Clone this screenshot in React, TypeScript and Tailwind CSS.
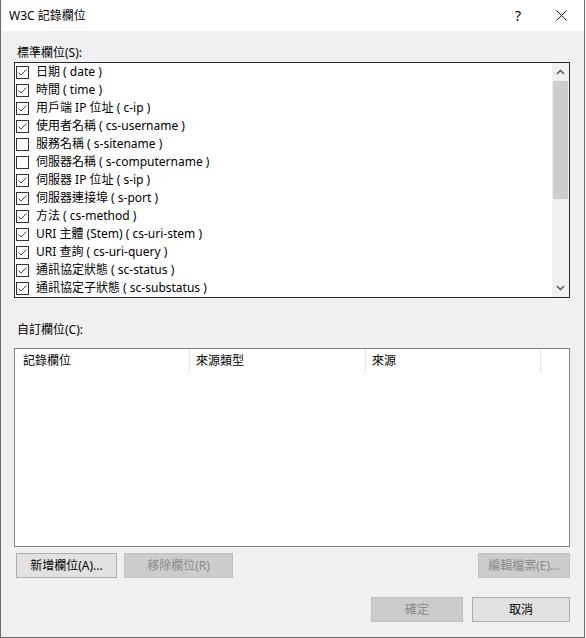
import React from 'react';

// Standard W3C logging fields shown in the upper list box
const fields: { label: string; checked: boolean }[] = [
  { label: '日期 ( date )', checked: true },
  { label: '時間 ( time )', checked: true },
  { label: '用戶端 IP 位址 ( c-ip )', checked: true },
  { label: '使用者名稱 ( cs-username )', checked: true },
  { label: '服務名稱 ( s-sitename )', checked: false },
  { label: '伺服器名稱 ( s-computername )', checked: false },
  { label: '伺服器 IP 位址 ( s-ip )', checked: true },
  { label: '伺服器連接埠 ( s-port )', checked: true },
  { label: '方法 ( cs-method )', checked: true },
  { label: 'URI 主體 (Stem) ( cs-uri-stem )', checked: true },
  { label: 'URI 查詢 ( cs-uri-query )', checked: true },
  { label: '通訊協定狀態 ( sc-status )', checked: true },
  { label: '通訊協定子狀態 ( sc-substatus )', checked: true },
];

const FONT = "font-['Noto_Sans','Noto_Sans_CJK_TC',sans-serif]";

function CheckBox({ checked }: { checked: boolean }) {
  return (
    <div className="w-[13px] h-[13px] border border-[#333333] bg-white shrink-0 flex items-center justify-center">
      {checked && (
        <svg width="11" height="11" viewBox="0 0 11 11">
          <polyline points="1.5,5.5 4,8 9.5,2.5" fill="none" stroke="#444444" strokeWidth="1" />
        </svg>
      )}
    </div>
  );
}

function Chevron({ up }: { up?: boolean }) {
  return (
    <svg width="9" height="6" viewBox="0 0 9 6">
      <polyline
        points={up ? '1,5 4.5,1.5 8,5' : '1,1 4.5,4.5 8,1'}
        fill="none"
        stroke="#606060"
        strokeWidth="1.6"
      />
    </svg>
  );
}

function Button({ label, disabled, className }: { label: string; disabled?: boolean; className: string }) {
  return (
    <div
      className={`flex items-center justify-center text-[12px] leading-none border
        ${disabled ? 'bg-[#cccccc] border-[#bfbfbf] text-[#8a8a8a]' : 'bg-[#e1e1e1] border-[#adadad] text-black'}
        ${className}`}
    >
      {label}
    </div>
  );
}

export default function App() {
  return (
    <div className={`w-[585px] h-[638px] bg-[#f0f0f0] border-l border-r border-b border-[#6a6a6a] flex flex-col ${FONT} text-black`}>
      {/* Title bar */}
      <div className="h-[31px] bg-white flex items-center shrink-0">
        <span className="pl-[8px] text-[12px]">W3C 記錄欄位</span>
        <span className="ml-auto text-[14px] w-[46px] pl-[6px] text-center">?</span>
        <div className="w-[46px] h-[31px] flex items-center justify-center">
          <svg width="11" height="11" viewBox="0 0 11 11">
            <path d="M0.5 0.5 L10.5 10.5 M10.5 0.5 L0.5 10.5" stroke="#111" strokeWidth="1" />
          </svg>
        </div>
      </div>

      <div className="flex flex-col pl-[13px]">
        {/* Standard fields */}
        <div className="mt-[13px] h-[18px] leading-[18px] text-[12px] pl-[3px]">標準欄位(S):</div>
        <div className="w-[556px] h-[236px] border border-[#2a2a2a] bg-white flex">
          <div className="flex-1 flex flex-col">
            {fields.map((f) => (
              <div key={f.label} className="h-[18px] flex items-center pl-[1px] gap-[7px]">
                <CheckBox checked={f.checked} />
                <span className="text-[12px] leading-none whitespace-nowrap">{f.label}</span>
              </div>
            ))}
          </div>
          <div className="w-[17px] bg-[#f0f0f0] flex flex-col">
            <div className="h-[18px] flex items-center justify-center">
              <Chevron up />
            </div>
            <div className="h-[118px] mx-[1px] bg-[#cdcdcd]" />
            <div className="flex-1" />
            <div className="h-[18px] flex items-center justify-center">
              <Chevron />
            </div>
          </div>
        </div>

        {/* Custom fields */}
        <div className="mt-[23px] h-[18px] leading-[18px] text-[12px] pl-[3px]">自訂欄位(C):</div>
        <div className="mt-[9px] w-[556px] h-[199px] border border-[#828282] bg-white">
          <div className="h-[24px] flex text-[12px]">
            <div className="w-[175px] border-r border-[#e5e5e5] pl-[8px] flex items-center">記錄欄位</div>
            <div className="w-[176px] border-r border-[#e5e5e5] pl-[6px] flex items-center">來源類型</div>
            <div className="w-[175px] border-r border-[#e5e5e5] pl-[6px] flex items-center">來源</div>
          </div>
        </div>

        {/* Field action buttons */}
        <div className="mt-[6px] flex w-[556px] pl-[2px]">
          <Button label="新增欄位(A)..." className="w-[101px] h-[25px]" />
          <Button label="移除欄位(R)" disabled className="ml-[7px] w-[109px] h-[25px]" />
          <Button label="編輯檔案(E)..." disabled className="ml-auto w-[92px] h-[25px]" />
        </div>

        {/* Dialog buttons */}
        <div className="mt-[19px] flex justify-end w-[556px]">
          <Button label="確定" disabled className="w-[92px] h-[25px]" />
          <Button label="取消" className="ml-[9px] w-[98px] h-[25px]" />
        </div>
      </div>
    </div>
  );
}
